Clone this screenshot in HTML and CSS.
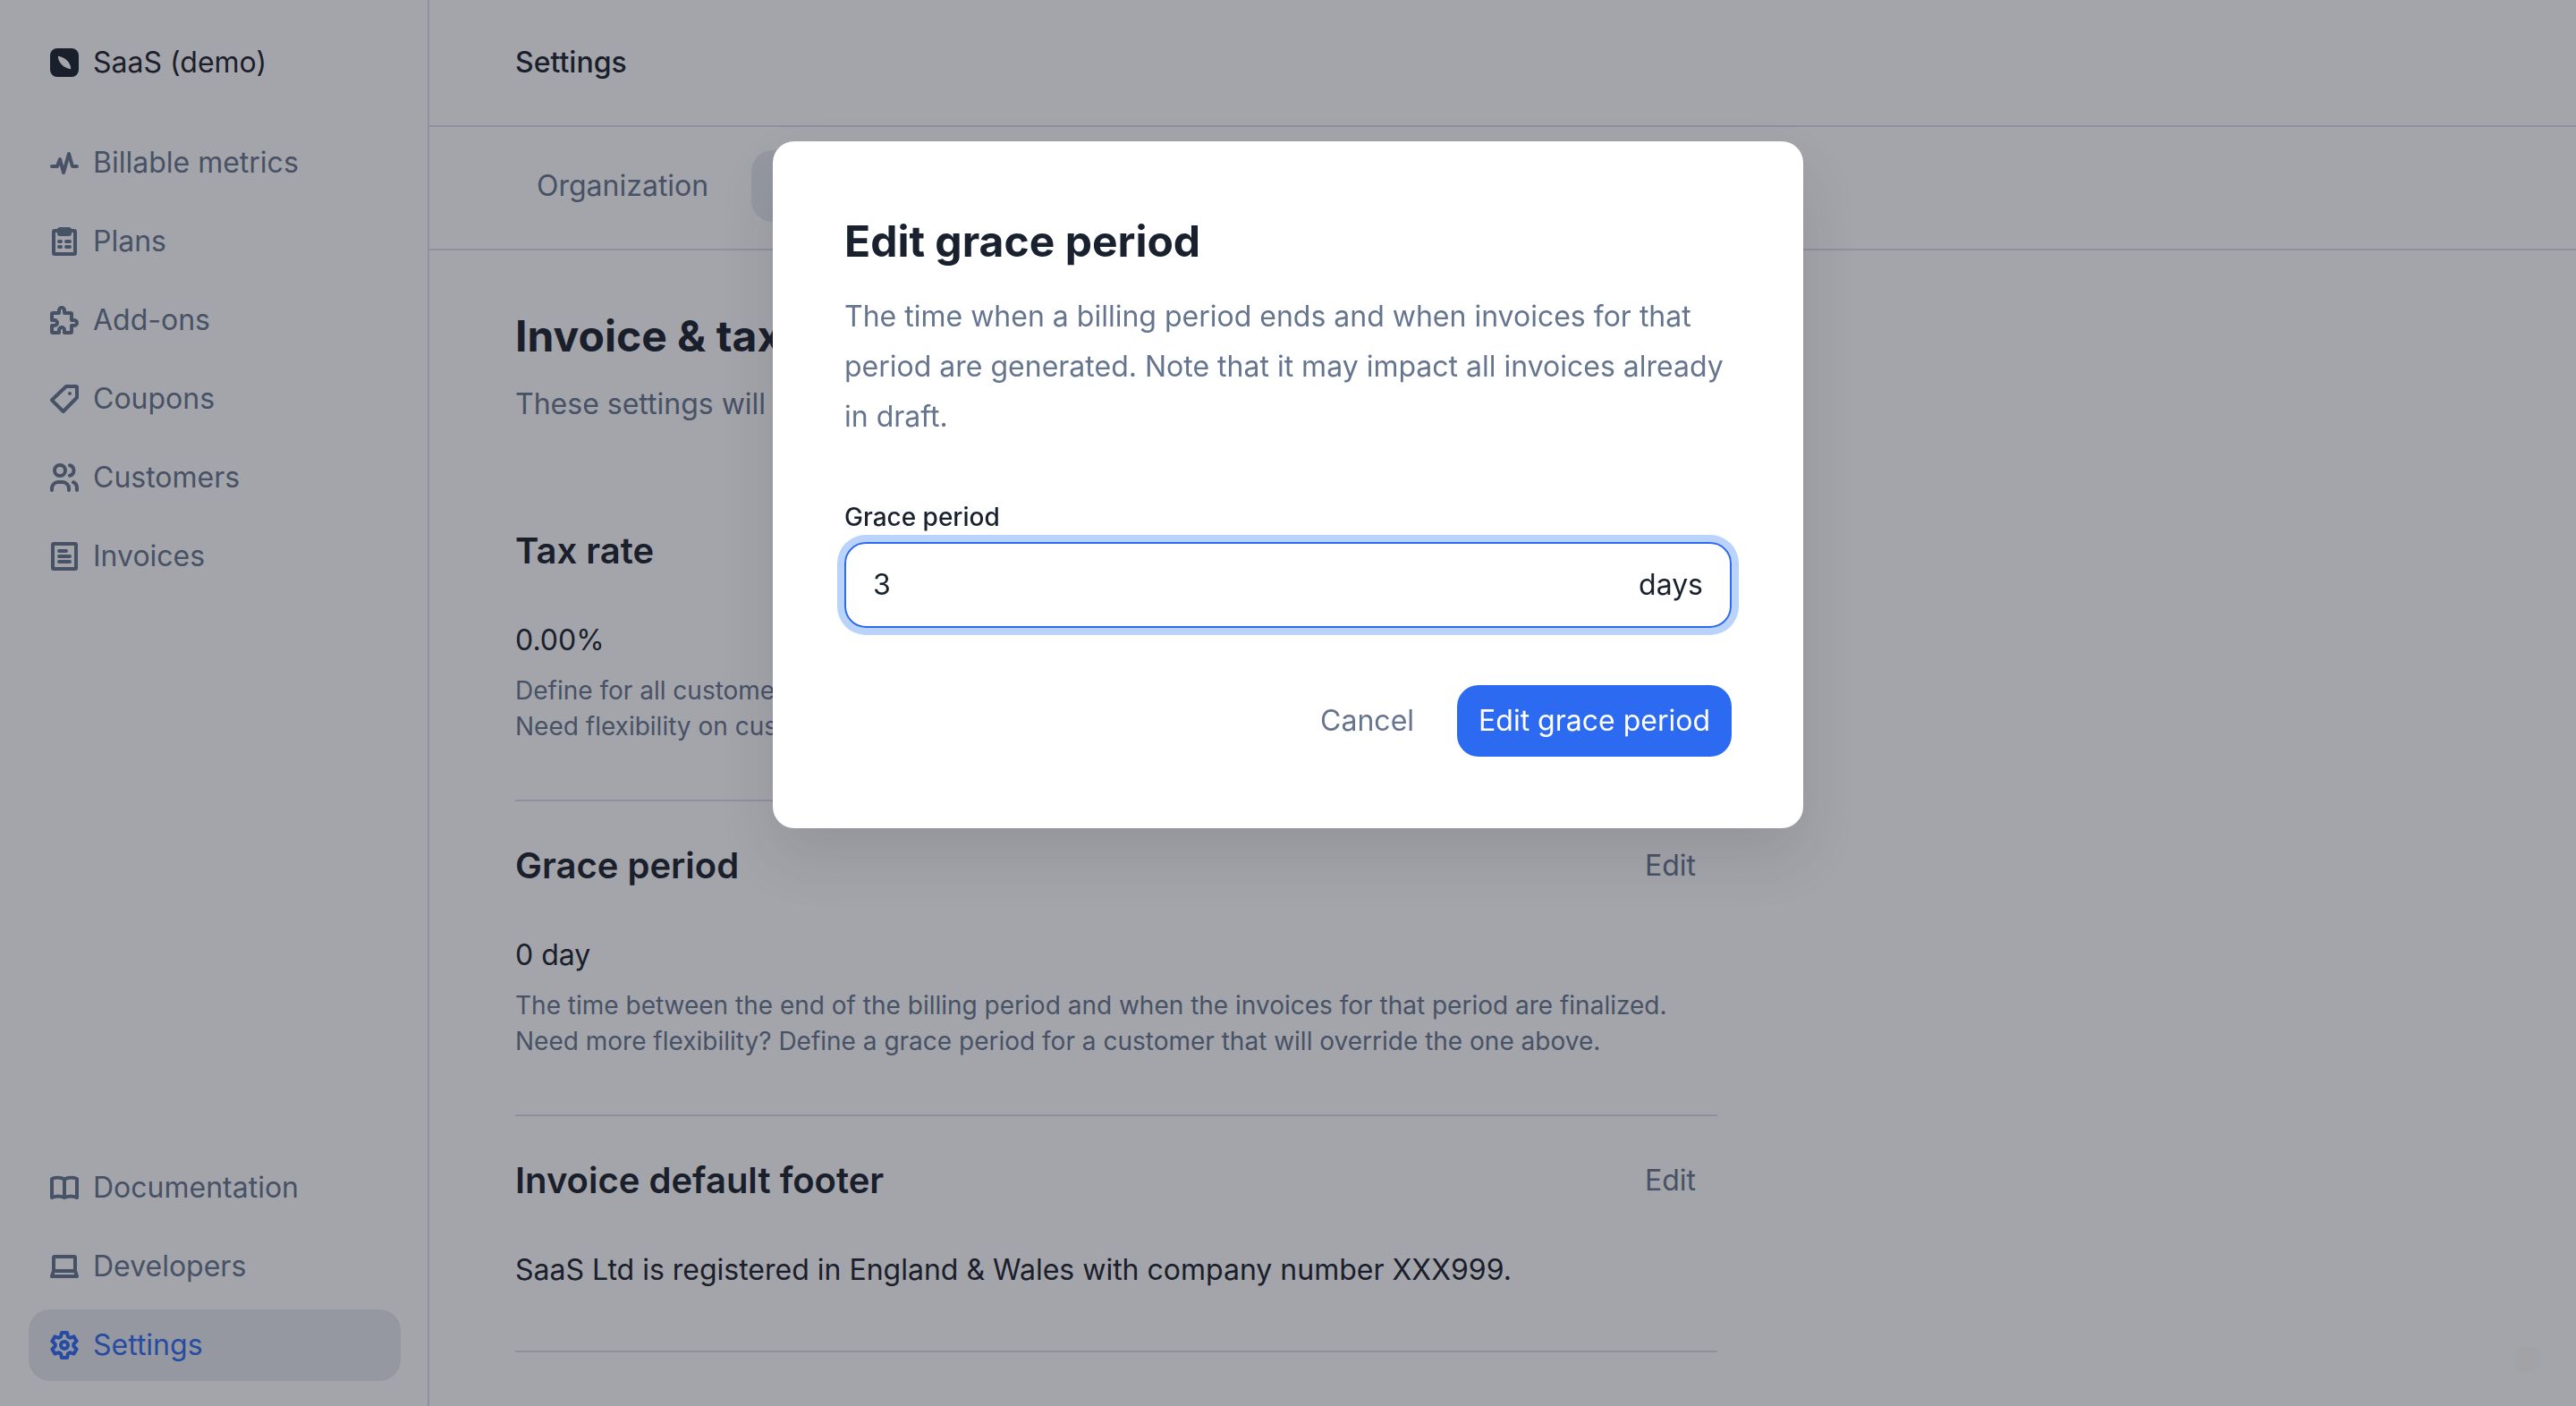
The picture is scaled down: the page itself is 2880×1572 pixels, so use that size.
FILE: index.html
```html
<!DOCTYPE html>
<html lang="en">
<head>
<meta charset="utf-8">
<meta name="viewport" content="width=device-width, initial-scale=1">
<title>Settings</title>
<link rel="stylesheet" href="styles.css">
</head>
<body>
<div class="app">
  <aside class="sidebar">
    <button class="org" type="button">
      <svg class="icon" viewBox="0 0 32 32" aria-hidden="true"><rect class="logo-box" width="32" height="32" rx="8"/><path class="logo-leaf" d="M8.800 8.800C15.500 9.300 23.300 15.500 23.300 23.300C16.500 22.700 8.800 16.500 8.800 8.800z"/></svg>
      <span>SaaS (demo)</span>
    </button>
    <nav class="nav nav-main" aria-label="Main">
      <a class="nav-link" href="#metrics"><svg class="icon" viewBox="0 0 32 32" aria-hidden="true"><path d="M2 20h6l3-8 4 15 6-21 4 14h5"/></svg>Billable metrics</a>
      <a class="nav-link" href="#plans"><svg class="icon" viewBox="0 0 32 32" aria-hidden="true"><rect x="4" y="4" width="24" height="26" rx="1"/><rect x="10" y="2" width="12" height="6" rx="1"/><path d="M10 16h2M18 16h4M10 22h2M18 22h4"/></svg>Plans</a>
      <a class="nav-link" href="#addons"><svg class="icon" viewBox="0 0 32 32" aria-hidden="true"><path d="M3 8h7V5a3 3 0 0 1 6 0v3h7a1 1 0 0 1 1 1v7h3a3 3 0 0 1 0 6h-3v7a1 1 0 0 1-1 1h-7v-3a3 3 0 0 0-6 0v3H3a1 1 0 0 1-1-1v-7h3a3 3 0 0 0 0-6H2V9a1 1 0 0 1 1-1z"/></svg>Add-ons</a>
      <a class="nav-link" href="#coupons"><svg class="icon" viewBox="0 0 32 32" aria-hidden="true"><path d="M18 2h11a1 1 0 0 1 1 1v11.500L14.700 30 2 17.300z"/><circle class="dot" cx="22" cy="10" r="2"/></svg>Coupons</a>
      <a class="nav-link" href="#customers"><svg class="icon" viewBox="0 0 32 32" aria-hidden="true"><circle cx="11" cy="8" r="6"/><path d="M2 30v-2a7 7 0 0 1 7-7h5a7 7 0 0 1 7 7v2M22 2.200a6 6 0 0 1 0 11.600M26 21.200c2.500 1 4 3.500 4 6.800v2"/></svg>Customers</a>
      <a class="nav-link" href="#invoices"><svg class="icon" viewBox="0 0 32 32" aria-hidden="true"><rect x="3" y="2" width="26" height="28" rx="1"/><path d="M10 10h8M10 16h12M10 22h12"/></svg>Invoices</a>
    </nav>
    <nav class="nav nav-bottom" aria-label="Resources">
      <a class="nav-link" href="#documentation"><svg class="icon" viewBox="0 0 32 32" aria-hidden="true"><path d="M16 6.500C12 4.300 6 4.300 2 6V27C6 25.300 12 25.300 16 27C20 25.300 26 25.300 30 27V6C26 4.300 20 4.300 16 6.500zV27"/></svg>Documentation</a>
      <a class="nav-link" href="#developers"><svg class="icon" viewBox="0 0 32 32" aria-hidden="true"><path d="M4 21V6a1 1 0 0 1 1-1h22a1 1 0 0 1 1 1v15zL2 27h28l-2-6"/></svg>Developers</a>
      <a class="nav-link is-active" href="#settings" aria-current="page"><svg class="icon" viewBox="0 0 32 32" aria-hidden="true"><path d="M13 2h6l1 4.500 2.200 1.300 4.400-1.400 3 5.200-3.300 3.100v2.600l3.300 3.100-3 5.200-4.400-1.400-2.200 1.300-1 4.500h-6l-1-4.500-2.200-1.300-4.400 1.400-3-5.200 3.300-3.100v-2.600l-3.300-3.100 3-5.200 4.400 1.400 2.200-1.300z"/><circle cx="16" cy="16" r="4"/></svg>Settings</a>
    </nav>
  </aside>
  <main class="main">
    <header class="page-header">Settings</header>
    <nav class="tabs" aria-label="Settings">
      <a class="tab" href="#organization">Organization</a>
      <a class="tab is-active" href="#invoice" aria-current="page">Invoice</a>
    </nav>
    <div class="content">
      <h1 class="title">Invoice &amp; tax</h1>
      <p class="lead">These settings will</p>
      <section class="setting">
        <div class="setting-head"><h2 class="subtitle">Tax rate</h2><button class="button" type="button">Edit</button></div>
        <p class="value">0.00%</p>
        <p class="hint">Define for all customers.<br>Need flexibility on customers?</p>
      </section>
      <section class="setting">
        <div class="setting-head"><h2 class="subtitle">Grace period</h2><button class="button" type="button">Edit</button></div>
        <p class="value">0 day</p>
        <p class="hint">The time between the end of the billing period and when the invoices for that period are finalized.<br>Need more flexibility? Define a grace period for a customer that will override the one above.</p>
      </section>
      <section class="setting">
        <div class="setting-head"><h2 class="subtitle">Invoice default footer</h2><button class="button" type="button">Edit</button></div>
        <p class="value">SaaS Ltd is registered in England &amp; Wales with company number XXX999.</p>
      </section>
    </div>
  </main>
</div>
<div class="backdrop">
  <form class="modal" role="dialog" aria-modal="true" aria-labelledby="modal-title">
    <h2 class="title" id="modal-title">Edit grace period</h2>
    <p class="modal-text">The time when a billing period ends and when invoices for that period are generated. Note that it may impact all invoices already in draft.</p>
    <label class="label" for="grace">Grace period</label>
    <div class="field">
      <input class="field-input" id="grace" type="text" inputmode="numeric" value="3">
      <span>days</span>
    </div>
    <div class="actions">
      <button class="button" type="button">Cancel</button>
      <button class="button button-primary" type="submit">Edit grace period</button>
    </div>
  </form>
</div>
<div class="corner-badge"></div>
</body>
</html>
```

FILE: styles.css
```css
:root {
  --ink: #19212e;
  --muted: #66758f;
  --line: #d9dee7;
  --active: #e8eaf0;
  --blue: #2d6af2;
  --ring: #b9d3fb;
}

* {
  box-sizing: border-box;
}

body {
  margin: 0;
  background: #fff;
  color: var(--ink);
  font: 400 32px/56px Inter, "Liberation Sans", sans-serif;
}

h1,
h2,
p {
  margin: 0;
}

button,
input {
  font: inherit;
  color: inherit;
}

.app {
  display: grid;
  grid-template: 100vh / 480px 1fr;
}

.main {
  min-width: 0;
  overflow: hidden;
}

.sidebar {
  display: flex;
  flex-direction: column;
  padding: 30px 30px 28px 32px;
  border-right: 2px solid var(--line);
}

.org,
.nav-link {
  display: flex;
  align-items: center;
  gap: 16px;
  height: 80px;
  padding: 0 24px;
  border: 0;
  border-radius: 24px;
  background: none;
}

.org {
  margin-bottom: 32px;
}

.nav {
  display: flex;
  flex-direction: column;
  gap: 8px;
}

.nav-bottom {
  margin-top: auto;
}

.nav-link {
  color: var(--muted);
  text-decoration: none;
}

.nav-link.is-active {
  background: var(--active);
  color: var(--blue);
}

.icon {
  flex: none;
  width: 32px;
  height: 32px;
  fill: none;
  stroke: currentColor;
  stroke-width: 4;
  stroke-linecap: round;
  stroke-linejoin: round;
}

.icon .dot {
  fill: currentColor;
  stroke: none;
}

.icon .logo-box {
  fill: var(--ink);
  stroke: none;
}

.icon .logo-leaf {
  fill: #fff;
  stroke: none;
}

.page-header {
  display: flex;
  align-items: center;
  height: 142px;
  padding: 0 96px;
  border-bottom: 2px solid var(--line);
  font-weight: 500;
}

.tabs {
  display: flex;
  gap: 24px;
  padding: 26px 96px 30px;
  border-bottom: 2px solid var(--line);
}

.tab {
  height: 80px;
  padding: 0 24px;
  border-radius: 24px;
  color: var(--muted);
  line-height: 80px;
  text-decoration: none;
}

.tab.is-active {
  background: var(--active);
  color: var(--blue);
}

.content {
  max-width: 1536px;
  padding: 64px 96px;
}

.title {
  font-size: 48px;
  font-weight: 700;
  line-height: 64px;
}

.lead {
  margin: 16px 0 64px;
  color: var(--muted);
}

.setting {
  padding: 32px 0 62px;
  border-bottom: 2px solid var(--line);
}

.setting-head {
  display: flex;
  align-items: center;
  justify-content: space-between;
  margin-bottom: 32px;
}

.subtitle {
  font-size: 40px;
  font-weight: 600;
}

.hint {
  margin-top: 8px;
  color: var(--muted);
  font-size: 28px;
  line-height: 40px;
}

.button {
  height: 80px;
  padding: 0 24px;
  border: 0;
  border-radius: 24px;
  background: none;
  color: var(--muted);
}

.button-primary {
  background: var(--blue);
  color: #fff;
}

.backdrop {
  position: fixed;
  inset: 0;
  display: flex;
  align-items: flex-start;
  justify-content: center;
  padding-top: 158px;
  background: rgba(28, 31, 43, 0.4);
}

.modal {
  width: 1152px;
  max-width: 100%;
  padding: 80px;
  border-radius: 24px;
  background: #fff;
  box-shadow: 0 32px 64px rgba(25, 33, 46, 0.12);
}

.modal-text {
  margin: 24px 0 64px;
  color: var(--muted);
}

.label {
  display: block;
  margin-bottom: 8px;
  font-size: 28px;
  font-weight: 500;
  line-height: 40px;
}

.field {
  display: flex;
  align-items: center;
  height: 96px;
  padding: 0 30px;
  border: 2px solid var(--blue);
  border-radius: 24px;
  box-shadow: 0 0 0 8px var(--ring);
}

.field-input {
  flex: 1;
  min-width: 0;
  padding: 0;
  border: 0;
  outline: 0;
  background: none;
}

.actions {
  display: flex;
  justify-content: flex-end;
  gap: 24px;
  margin-top: 64px;
}

.corner-badge {
  position: fixed;
  right: 40px;
  bottom: 38px;
  width: 28px;
  height: 28px;
  border-radius: 8px;
  background: rgba(155, 150, 155, 0.15);
}
```
